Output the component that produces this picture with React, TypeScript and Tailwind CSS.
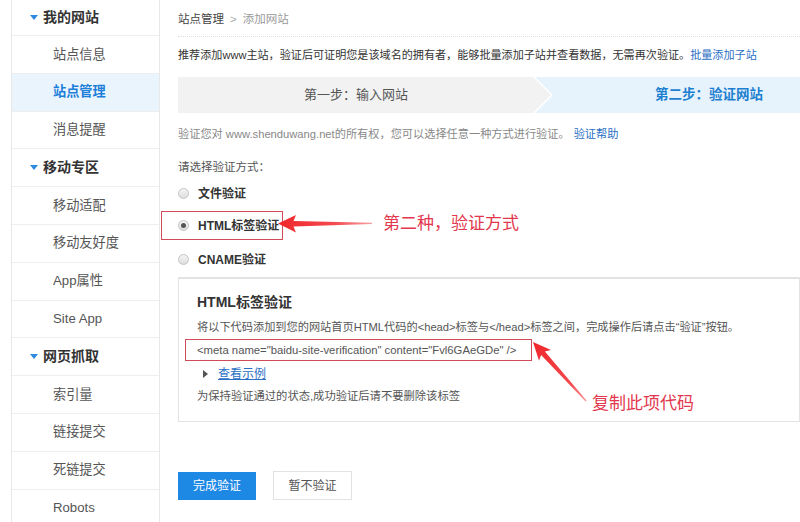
import React from 'react';

const font = "font-['Liberation_Sans','Noto_Sans_CJK_SC',sans-serif]";

type NavItem = { label: string; header?: boolean; active?: boolean };

const navItems: NavItem[] = [
  { label: '我的网站', header: true },
  { label: '站点信息' },
  { label: '站点管理', active: true },
  { label: '消息提醒' },
  { label: '移动专区', header: true },
  { label: '移动适配' },
  { label: '移动友好度' },
  { label: 'App属性' },
  { label: 'Site App' },
  { label: '网页抓取', header: true },
  { label: '索引量' },
  { label: '链接提交' },
  { label: '死链提交' },
  { label: 'Robots' },
];

function Sidebar() {
  return (
    <div className="ml-[11px] w-[149px] shrink-0 border-x border-[#e8e8e8] bg-white">
      {navItems.map((item, i) => (
        <div
          key={item.label}
          className={[
            'flex items-center border-b border-[#eeeeee]',
            i === 0 ? 'h-[36px]' : 'h-[37.8px]',
            item.active ? 'bg-[#e9f4fd]' : '',
          ].join(' ')}
        >
          {item.header ? (
            <div className="flex items-center pl-[18px]">
              <svg width="8" height="6" viewBox="0 0 8 6" className="mr-[5px]">
                <polygon points="0,0 8,0 4,5" fill="#2d8ae0" />
              </svg>
              <span className="text-[14px] font-bold text-[#333]">{item.label}</span>
            </div>
          ) : (
            <span
              className={[
                'pl-[41px] text-[13.2px]',
                item.active ? 'font-bold text-[#1d7fd8]' : 'text-[#555]',
              ].join(' ')}
            >
              {item.label}
            </span>
          )}
        </div>
      ))}
    </div>
  );
}

function Radio({ checked }: { checked?: boolean }) {
  return (
    <span className="flex h-[11px] w-[11px] items-center justify-center rounded-full border border-[#c4c4c4] bg-gradient-to-b from-[#f4f4f4] to-[#dedede]">
      {checked && <span className="h-[5px] w-[5px] rounded-full bg-[#555]" />}
    </span>
  );
}

function Arrows() {
  return (
    <svg
      className="pointer-events-none absolute left-0 top-0"
      width="800"
      height="522"
      viewBox="0 0 800 522"
    >
      <defs>
        <linearGradient id="a1" x1="278" y1="0" x2="372" y2="0" gradientUnits="userSpaceOnUse">
          <stop offset="0" stopColor="#f0262b" />
          <stop offset="0.6" stopColor="#f24a4e" />
          <stop offset="1" stopColor="#f7a0a2" />
        </linearGradient>
        <linearGradient id="a2" x1="533" y1="342" x2="587" y2="401" gradientUnits="userSpaceOnUse">
          <stop offset="0" stopColor="#f0262b" />
          <stop offset="0.7" stopColor="#f24a4e" />
          <stop offset="1" stopColor="#f7a0a2" />
        </linearGradient>
      </defs>
      <polygon
        points="278,223.5 296,215 293.5,221 372,222.8 372,224 293.5,226.5 296,232.5"
        fill="url(#a1)"
      />
      <polygon
        points="533,342 551,350.1 544.9,351.5 586.6,400.6 585.6,401.6 541.1,354.9 539,360.7"
        fill="url(#a2)"
      />
    </svg>
  );
}

export default function App() {
  return (
    <div className={`relative flex h-[522px] w-[800px] overflow-hidden bg-white ${font}`}>
      <Sidebar />

      <div className="ml-[18px] flex-1">
        {/* Breadcrumb */}
        <div className="flex h-[37px] items-center border-b border-dotted border-[#dddddd] pt-[4px] text-[11.5px]">
          <span className="text-[#444]">站点管理</span>
          <span className="mx-[6px] text-[#aaa]">&gt;</span>
          <span className="text-[#999]">添加网站</span>
        </div>

        <div className="mt-[8px] h-[20px] text-[11.1px] leading-[20px] text-[#333]">
          推荐添加www主站，验证后可证明您是该域名的拥有者，能够批量添加子站并查看数据，无需再次验证。
          <span className="text-[#2a6fc4]">批量添加子站</span>
        </div>

        {/* Steps */}
        <div className="mt-[12px] flex h-[36px]">
          <div className="flex w-[356px] items-center justify-center bg-[#f2f2f2] text-[13px] text-[#555]">
            第一步：输入网站
          </div>
          <svg width="18" height="36" viewBox="0 0 18 36" className="shrink-0">
            <rect width="18" height="36" fill="#e6f3fd" />
            <polygon points="0,0 18,18 0,36" fill="#f2f2f2" />
            <polyline points="0,0 18,18 0,36" fill="none" stroke="#ffffff" strokeWidth="1.5" />
          </svg>
          <div className="flex flex-1 items-center bg-[#e6f3fd] pl-[103px] text-[13.5px] font-bold text-[#1d7fd0]">
            第二步：验证网站
          </div>
        </div>

        <div className="mt-[11px] h-[20px] text-[11.2px] leading-[20px] text-[#888]">
          验证您对 www.shenduwang.net的所有权，您可以选择任意一种方式进行验证。
          <span className="ml-[4px] text-[#2a6fc4]">验证帮助</span>
        </div>

        <div className="mt-[13px] h-[20px] text-[11.5px] leading-[20px] text-[#555]">请选择验证方式：</div>

        {/* Radios */}
        <div className="flex h-[33px] items-center">
          <Radio />
          <span className="ml-[9px] text-[12px] font-bold text-[#333]">文件验证</span>
        </div>
        <div className="flex h-[33px] items-start pt-[1px]">
          <div className="ml-[-17px] flex h-[29px] w-[122px] items-center border border-solid border-[#d04a58] pl-[16px]">
            <Radio checked />
            <span className="ml-[9px] text-[12px] font-bold text-[#333]">HTML标签验证</span>
          </div>
        </div>
        <div className="flex h-[33px] items-center">
          <Radio />
          <span className="ml-[9px] text-[12px] font-bold text-[#333]">CNAME验证</span>
        </div>

        {/* HTML tag box */}
        <div className="mt-[1px] h-[145px] border border-t-2 border-[#e3e3e3] px-[18px] pt-[12px]">
          <div className="h-[22px] text-[14px] font-bold leading-[22px] text-[#333]">HTML标签验证</div>
          <div className="mt-[4px] h-[20px] text-[11.2px] leading-[20px] text-[#555]">
            将以下代码添加到您的网站首页HTML代码的&lt;head&gt;标签与&lt;/head&gt;标签之间，完成操作后请点击“验证”按钮。
          </div>
          <div className="ml-[-12px] mt-[2px] flex h-[22px] w-[347px] items-center border border-solid border-[#d04a58] pl-[11px] text-[11.3px] text-[#555]">
            &lt;meta name="baidu-site-verification" content="Fvl6GAeGDe" /&gt;
          </div>
          <div className="mt-[3px] flex h-[20px] items-center">
            <svg width="5" height="8" viewBox="0 0 5 8" className="ml-[6px] mr-[10px]">
              <polygon points="0,0 5,4 0,8" fill="#555" />
            </svg>
            <span className="text-[12px] text-[#2a6fc4] underline">查看示例</span>
          </div>
          <div className="mt-[2px] h-[20px] text-[11.3px] leading-[20px] text-[#555]">
            为保持验证通过的状态,成功验证后请不要删除该标签
          </div>
        </div>

        {/* Buttons */}
        <div className="mt-[49px] flex items-center gap-[17px]">
          <button className="h-[28px] w-[78px] bg-[#1e88e5] text-[12px] text-white">完成验证</button>
          <button className="h-[29px] w-[79px] border border-[#e2e2e2] bg-white text-[12px] text-[#555]">
            暂不验证
          </button>
        </div>
      </div>

      {/* Annotations */}
      <Arrows />
      <div className="pointer-events-none absolute left-[383px] top-[213px] text-[17px] leading-[22px] text-[#e2374d]">
        第二种，验证方式
      </div>
      <div className="pointer-events-none absolute left-[592px] top-[393px] text-[17px] leading-[22px] text-[#e2374d]">
        复制此项代码
      </div>
    </div>
  );
}
